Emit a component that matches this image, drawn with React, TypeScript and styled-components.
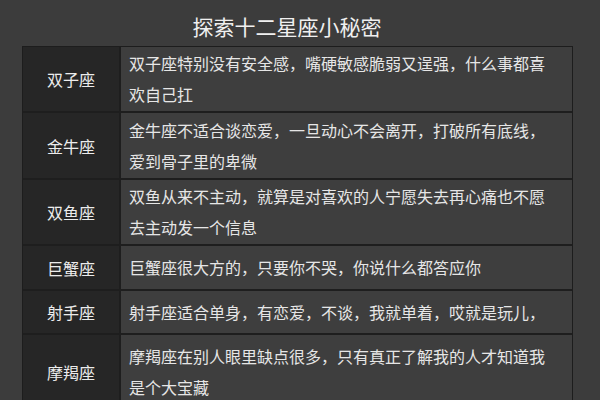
import styled, { createGlobalStyle } from "styled-components";

interface ISign {
  name: string;
  lines: string[];
  height: number;
}

const signs: ISign[] = [
  {
    name: "双子座",
    lines: ["双子座特别没有安全感，嘴硬敏感脆弱又逞强，什么事都喜", "欢自己扛"],
    height: 64,
  },
  {
    name: "金牛座",
    lines: ["金牛座不适合谈恋爱，一旦动心不会离开，打破所有底线，", "爱到骨子里的卑微"],
    height: 65,
  },
  {
    name: "双鱼座",
    lines: ["双鱼从来不主动，就算是对喜欢的人宁愿失去再心痛也不愿", "去主动发一个信息"],
    height: 64,
  },
  {
    name: "巨蟹座",
    lines: ["巨蟹座很大方的，只要你不哭，你说什么都答应你"],
    height: 43,
  },
  {
    name: "射手座",
    lines: ["射手座适合单身，有恋爱，不谈，我就单着，哎就是玩儿，"],
    height: 42,
  },
  {
    name: "摩羯座",
    lines: ["摩羯座在别人眼里缺点很多，只有真正了解我的人才知道我", "是个大宝藏"],
    height: 74,
  },
];

const GlobalStyle = createGlobalStyle`
  html, body {
    margin: 0;
    padding: 0;
    background: #3c3c3c;
    overflow: hidden;
  }
  body {
    font-family: "Noto Sans CJK SC", "Noto Sans", sans-serif;
  }
`;

export default function App(): JSX.Element {
  return (
    <Page>
      <GlobalStyle />
      <Title>探索十二星座小秘密</Title>
      <Table>
        {signs.map((sign) => (
          <Row key={sign.name} $height={sign.height}>
            <NameCell>{sign.name}</NameCell>
            <TextCell>
              {sign.lines.map((line) => (
                <Line key={line}>{line}</Line>
              ))}
            </TextCell>
          </Row>
        ))}
      </Table>
    </Page>
  );
}

const Page = styled.div`
  width: 600px;
  height: 400px;
  background: #3c3c3c;
  padding: 11px 0 0 22px;
  box-sizing: border-box;
  overflow: hidden;
`;

const Title = styled.h1`
  margin: 0 0 5px;
  width: 530px;
  text-align: center;
  font-size: 21px;
  font-weight: 400;
  line-height: 30px;
  color: #f0f0f0;
`;

const Table = styled.div`
  width: 549px;
  border: 1px solid #1d1d1d;
  border-bottom: none;
  display: flex;
  flex-direction: column;
`;

const Row = styled.div<{ $height: number }>`
  display: grid;
  grid-template-columns: 98px 1fr;
  height: ${({ $height }) => $height}px;
  border-bottom: 2px solid #1e1e1e;
  flex-shrink: 0;
`;

const NameCell = styled.div`
  background: #262626;
  border-right: 2px solid #1e1e1e;
  color: #ececec;
  font-size: 16px;
  display: flex;
  align-items: center;
  justify-content: center;
`;

const TextCell = styled.div`
  background: #3e3e3e;
  padding: 0 6px 0 8px;
  display: flex;
  flex-direction: column;
  justify-content: center;
  color: #e6e6e6;
  font-size: 16px;
`;

const Line = styled.div`
  white-space: nowrap;
  line-height: 31px;
`;
